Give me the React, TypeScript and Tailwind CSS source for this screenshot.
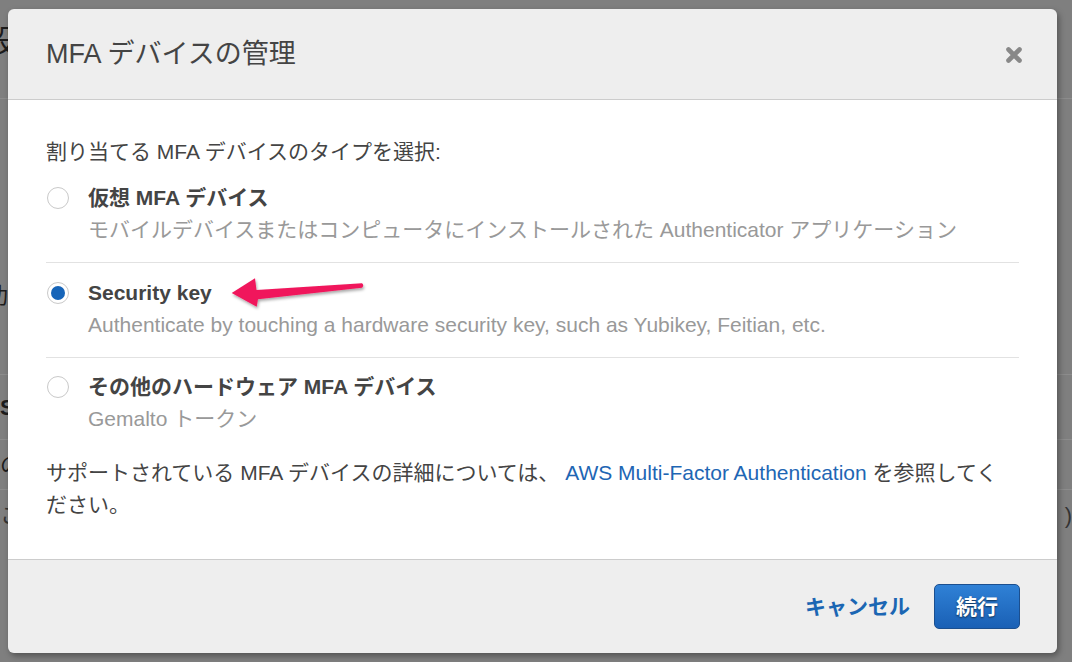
import React from 'react';

const FONT = "font-['Liberation_Sans','Noto_Sans_CJK_JP',sans-serif]";

function Radio({ checked }: { checked?: boolean }) {
  return (
    <span className="mt-[5px] flex h-[22px] w-[22px] shrink-0 items-center justify-center rounded-full border border-[#c9c9c9] bg-white">
      {checked && <span className="h-[14px] w-[14px] rounded-full bg-[#1664b8]" />}
    </span>
  );
}

interface OptionProps {
  title: string;
  desc: string;
  checked?: boolean;
  className?: string;
  children?: React.ReactNode;
}

function Option({ title, desc, checked, className, children }: OptionProps) {
  return (
    <div className={`relative flex gap-[19px] pl-px ${className ?? ''}`}>
      <Radio checked={checked} />
      <div className="leading-[32px]">
        <div className="font-bold text-[#444]">{title}</div>
        <div className="text-[#999]">{desc}</div>
      </div>
      {children}
    </div>
  );
}

// the pink annotation arrow drawn over the dialog
function Arrow() {
  return (
    <svg
      className="pointer-events-none absolute left-[179px] top-[9px]"
      width="150"
      height="45"
      viewBox="0 0 150 45"
    >
      <defs>
        <filter id="sh" x="-10%" y="-30%" width="130%" height="170%">
          <feDropShadow dx="1" dy="2" stdDeviation="1.5" floodColor="#000" floodOpacity="0.35" />
        </filter>
      </defs>
      <path
        d="M6.7 21 L30 6.3 L31.5 18 L137 11.3 Q139.5 13.4 137 15.7 L33 27.2 L31.7 34.7 Z"
        fill="#f0175b"
        filter="url(#sh)"
      />
    </svg>
  );
}

export default function App() {
  return (
    <div className={`relative h-[662px] w-full overflow-hidden bg-[#7f7f7f] ${FONT}`}>
      {/* dimmed page behind the dialog */}
      <div className="flex flex-col text-[#1c1c1c]">
        <div className="h-[99px] border-b border-[#8c8c8c] pt-[18px] text-[30px] -ml-[14px]">設定</div>
        <div className="h-[176px]" />
        <div className="flex h-[40px] items-center text-[22px] -ml-[36px]">成功</div>
        <div className="h-[60px] border-b border-[#8c8c8c]" />
        <div className="flex h-[65px] items-center border-b border-[#8c8c8c] text-[22px] font-bold">S</div>
        <div className="flex h-[50px] items-center border-b border-[#8c8c8c] text-[22px]">の</div>
        <div className="flex h-[50px] items-center justify-between text-[22px] text-[#333]">
          <span>こ</span>
          <span>)</span>
        </div>
      </div>

      {/* dialog overlay */}
      <div className="absolute inset-0 pl-[8px] pt-[9px]">
        <div className="relative flex h-[644px] w-[1049px] flex-col overflow-hidden rounded-[6px] shadow-[2px_3px_6px_rgba(0,0,0,0.35)]">
          <div className="flex h-[91px] shrink-0 items-center justify-between border-b border-[#cccccc] bg-[#eeeeee] pl-[38px] pr-[35px]">
            <h1 className="text-[27px] text-[#444]">MFA デバイスの管理</h1>
            <svg width="16" height="16" viewBox="0 0 16 16" className="mt-px">
              <path d="M2.5 2.5 L13.5 13.5 M13.5 2.5 L2.5 13.5" stroke="#888" strokeWidth="4.6" strokeLinecap="round" />
            </svg>
          </div>

          <div className="shrink-0 bg-white px-[38px] pb-[38px] pt-[36px] text-[21px]">
            <p className="leading-[32px] text-[#444]">割り当てる MFA デバイスのタイプを選択:</p>
            <div className="mt-[14px]">
              <Option
                className="border-b border-[#e2e2e2] pb-[16px]"
                title="仮想 MFA デバイス"
                desc="モバイルデバイスまたはコンピュータにインストールされた Authenticator アプリケーション"
              />
              <Option
                className="border-b border-[#e2e2e2] pb-[16px] pt-[14px]"
                checked
                title="Security key"
                desc="Authenticate by touching a hardware security key, such as Yubikey, Feitian, etc."
              >
                <Arrow />
              </Option>
              <Option className="pt-[13px]" title="その他のハードウェア MFA デバイス" desc="Gemalto トークン" />
            </div>
            <p className="mt-[22px] leading-[32px] text-[#444]">
              サポートされている MFA デバイスの詳細については、 <span className="text-[#1e66b4]">AWS Multi-Factor Authentication</span> を参照してく
              <br />
              ださい。
            </p>
          </div>

          <div className="flex flex-1 items-center justify-end gap-6 border-t border-[#cccccc] bg-[#eeeeee] pr-[37px]">
            <span className="text-[21px] font-bold text-[#1b66b3]">キャンセル</span>
            <button className="h-[45px] w-[86px] rounded-[5px] border border-[#1b4f8f] bg-linear-to-b from-[#2f81d6] to-[#1a60b5] text-[21px] font-bold text-white [text-shadow:0_1px_2px_rgba(0,0,0,0.6)]">
              続行
            </button>
          </div>
        </div>
      </div>
    </div>
  );
}
